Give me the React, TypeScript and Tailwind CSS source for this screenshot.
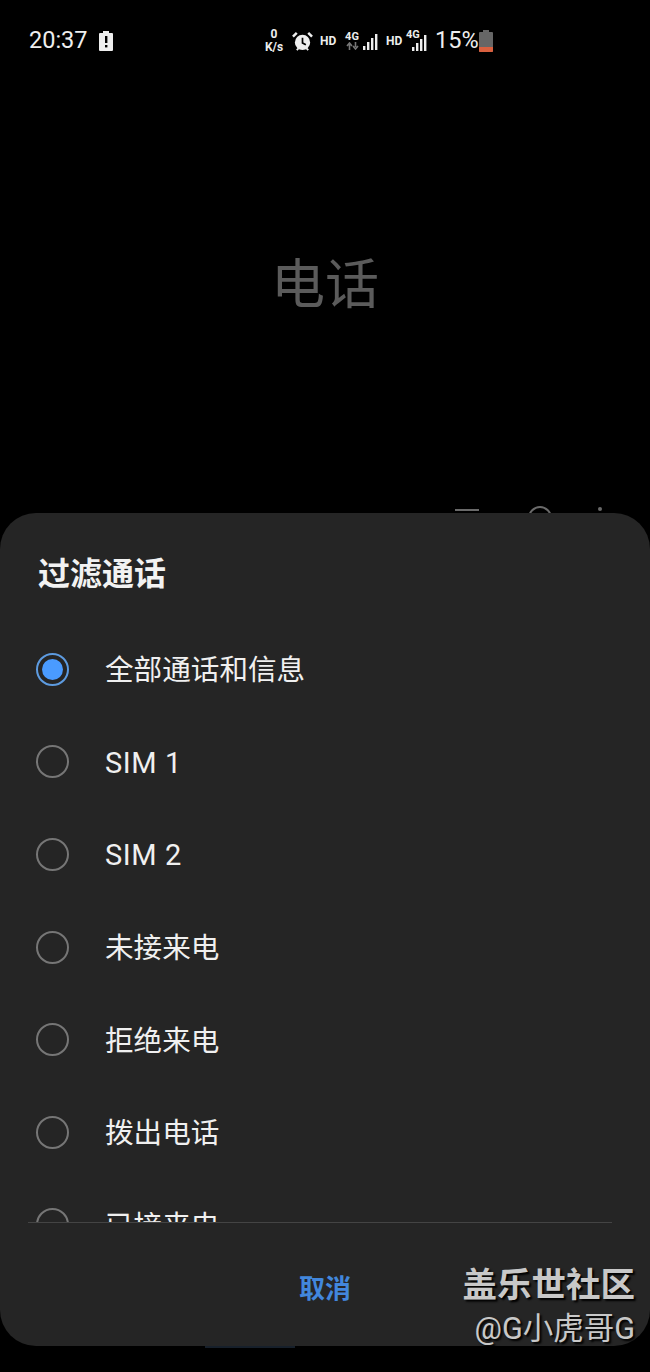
const CJK = { fontFamily: '"Roboto","Noto Sans CJK SC",sans-serif' };

function Radio({ on = false }: { on?: boolean }) {
  return on ? (
    <span className="flex h-[33px] w-[33px] shrink-0 items-center justify-center rounded-full border-2 border-[#5d9be0]">
      <span className="h-[21px] w-[21px] rounded-full bg-[#4a9bff]" />
    </span>
  ) : (
    <span className="h-[33px] w-[33px] shrink-0 rounded-full border-2 border-[#767676]" />
  );
}

function Row({ label, on, latin }: { label: string; on?: boolean; latin?: boolean }) {
  return (
    <div className="flex h-[92.6px] shrink-0 items-center gap-[36px] pl-[36px]">
      <Radio on={on} />
      <span className={latin ? "pt-[2px] text-[29px] leading-[36px] tracking-[0.6px] text-[#f0f0f0]" : "pt-[2px] text-[28.6px] leading-[36px] text-[#f0f0f0]"}>
        {label}
      </span>
    </div>
  );
}

function Bars({ className = "" }: { className?: string }) {
  return (
    <svg width="18" height="20" viewBox="0 0 18 20" className={className}>
      <rect x="0" y="15" width="2.4" height="4" fill="#eee" />
      <rect x="4" y="11" width="2.4" height="8" fill="#eee" />
      <rect x="8" y="7" width="2.4" height="12" fill="#eee" />
      <rect x="12" y="3" width="2.4" height="16" fill="#eee" />
    </svg>
  );
}

function StatusBar() {
  return (
    <div className="flex h-[80px] items-center pt-[2px] text-[#eee]">
      <span className="ml-[29px] w-[60px] text-[23.5px] leading-none">20:37</span>
      <svg width="14" height="20" viewBox="0 0 14 20" className="ml-[10px]">
        <path d="M4 0h6v2h3a1 1 0 0 1 1 1v16a1 1 0 0 1-1 1H1a1 1 0 0 1-1-1V3a1 1 0 0 1 1-1h3z" fill="#eee" />
        <rect x="6" y="5" width="2.4" height="7" fill="#000" />
        <rect x="6" y="14" width="2.4" height="2.4" fill="#000" />
      </svg>
      <div className="ml-[148px] flex w-[26px] flex-col items-center text-[12px] font-bold leading-[13px]">
        <span>0</span>
        <span>K/s</span>
      </div>
      <svg width="21" height="21" viewBox="0 0 22 22" className="ml-[5px]">
        <circle cx="11" cy="12" r="8" fill="#eee" />
        <path d="M11 7v5.5l3.5 2" stroke="#000" strokeWidth="1.8" fill="none" />
        <path d="M1 6l4-4M21 6l-4-4" stroke="#eee" strokeWidth="2.6" />
        <path d="M5 20l2-2M17 20l-2-2" stroke="#eee" strokeWidth="2" />
      </svg>
      <span className="ml-[7px] w-[16px] text-[12px] font-bold leading-none">HD</span>
      <div className="ml-[9px] flex w-[14px] flex-col items-center">
        <span className="text-[11px] font-bold leading-[10px]">4G</span>
        <svg width="13" height="8" viewBox="0 0 13 8">
          <path d="M3.5 8V3M1 4l2.5-3L6 4M9.5 0v5M7 4l2.5 3L12 4" stroke="#777" strokeWidth="1.6" fill="none" />
        </svg>
      </div>
      <Bars className="ml-[4px]" />
      <span className="ml-[5px] w-[16px] text-[12px] font-bold leading-none">HD</span>
      <div className="relative ml-[4px] h-[22px] w-[24px]">
        <span className="absolute left-0 top-0 text-[11px] font-bold leading-[10px]">4G</span>
        <Bars className="absolute left-[6px] top-[2px]" />
      </div>
      <span className="ml-[5px] w-[42px] text-[23.5px] leading-none">15%</span>
      <svg width="14" height="22" viewBox="0 0 14 22" className="ml-[2px]">
        <path d="M4 0h6v2h3a1 1 0 0 1 1 1v18a1 1 0 0 1-1 1H1a1 1 0 0 1-1-1V3a1 1 0 0 1 1-1h3z" fill="#666" />
        <path d="M0 17h14v4a1 1 0 0 1-1 1H1a1 1 0 0 1-1-1z" fill="#d9603f" />
      </svg>
    </div>
  );
}

export default function App() {
  return (
    <div className="relative h-[1372px] w-[650px] overflow-hidden bg-black" style={CJK}>
      <StatusBar />
      <div className="flex h-[433px] flex-col overflow-hidden">
        <div className="mt-[176px] text-center text-[54px] leading-[60px] text-[#5b5b5b]">电话</div>
        <div className="mt-[190px] flex items-start">
          <span className="ml-[455px] mt-[3px] h-[2px] w-[24px] shrink-0 bg-[#6a6a6a]" />
          <span className="ml-[49px] h-[24px] w-[24px] shrink-0 rounded-full border-2 border-[#6a6a6a]" />
          <span className="ml-[46px] mt-[1px] h-[4px] w-[4px] shrink-0 rounded-full bg-[#6a6a6a]" />
        </div>
      </div>
      <div className="flex h-[833px] flex-col rounded-[36px] bg-[#252525]">
        <div className="pl-[38px] pt-[39px] text-[32px] font-bold leading-[44px] text-[#f2f2f2]">过滤通话</div>
        <div className="mt-[27px] flex h-[599px] flex-col overflow-hidden">
          <Row label="全部通话和信息" on />
          <Row label="SIM 1" latin />
          <Row label="SIM 2" latin />
          <Row label="未接来电" />
          <Row label="拒绝来电" />
          <Row label="拨出电话" />
          <Row label="已接来电" />
        </div>
        <div className="ml-[28px] mr-[38px] h-px bg-[#444444]" />
        <div className="flex flex-1 items-start justify-center pt-[48px]">
          <span className="text-[26px] font-bold leading-[36px] text-[#4287dc]">取消</span>
        </div>
      </div>
      <div className="ml-[205px] h-[2px] w-[90px] bg-[#17202b]" />
      <div className="absolute bottom-[25px] right-[15px] flex flex-col items-end text-[#c8c8c8] [text-shadow:2px_2px_2px_#000]">
        <span className="text-[34.5px] font-bold leading-[40px]">盖乐世社区</span>
        <span className="mt-[6px] text-[30.5px] leading-[36px]">@G小虎哥G</span>
      </div>
    </div>
  );
}
